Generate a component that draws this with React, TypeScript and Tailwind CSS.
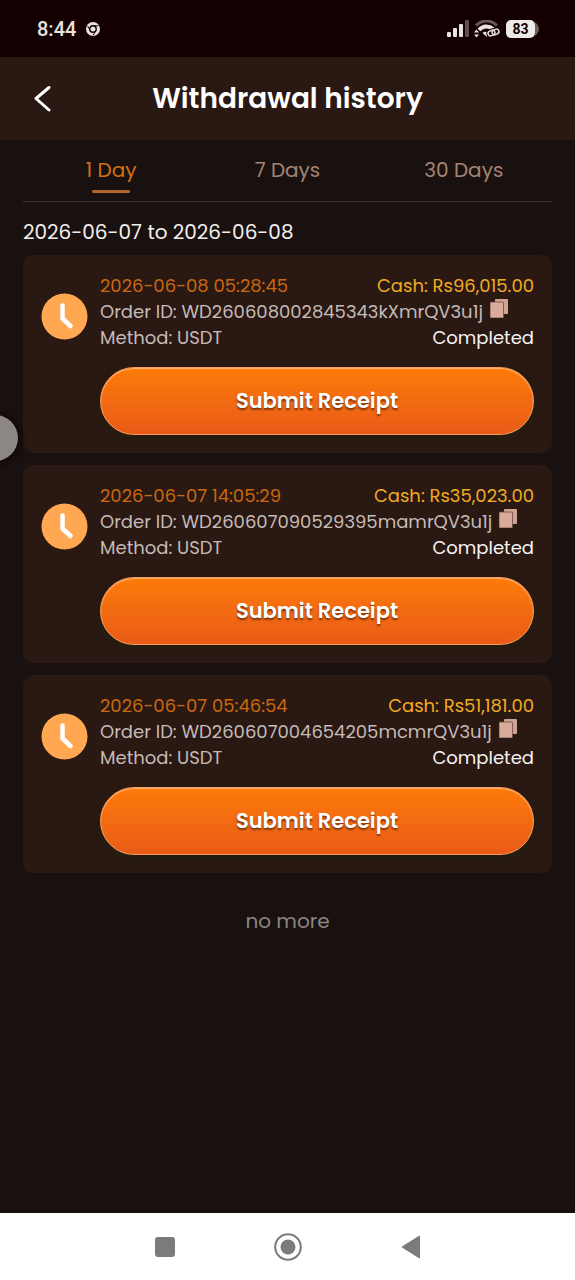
import React from "react";

interface Withdrawal {
  date: string;
  cash: string;
  orderId: string;
  method: string;
  status: string;
}

const withdrawals: Withdrawal[] = [
  {
    date: "2026-06-08 05:28:45",
    cash: "Rs96,015.00",
    orderId: "WD260608002845343kXmrQV3u1j",
    method: "USDT",
    status: "Completed",
  },
  {
    date: "2026-06-07 14:05:29",
    cash: "Rs35,023.00",
    orderId: "WD260607090529395mamrQV3u1j",
    method: "USDT",
    status: "Completed",
  },
  {
    date: "2026-06-07 05:46:54",
    cash: "Rs51,181.00",
    orderId: "WD260607004654205mcmrQV3u1j",
    method: "USDT",
    status: "Completed",
  },
];

const tabs = ["1 Day", "7 Days", "30 Days"];

const StatusBar: React.FC = () => {
  return (
    <div className="flex h-[57px] items-center justify-between bg-[#140000] pl-[37px] pr-[36px] text-[#e8e2e1]">
      <div className="flex items-center gap-[10px]">
        <span className="font-['Roboto',sans-serif] text-[20px] font-medium leading-6">8:44</span>
        <svg className="h-[14px] w-[14px]" viewBox="0 0 14 14" fill="none" aria-hidden="true">
          <circle cx="7" cy="7" r="7" fill="currentColor" />
          <circle cx="7" cy="7" r="3.2" stroke="#140000" strokeWidth="1.4" />
          <path d="M7 3.800h5.500M4.200 8.600 1.700 4.200M9.800 8.600 7 13.400" stroke="#140000" strokeWidth="1" />
        </svg>
      </div>
      <div className="flex items-center gap-[5px]">
        <svg className="h-[17px] w-[22px]" viewBox="0 0 22 17" aria-hidden="true">
          <g fill="currentColor">
            <rect x="0" y="12" width="4" height="5" rx="1" />
            <rect x="6" y="8" width="4" height="9" rx="1" />
            <rect x="12" y="4" width="4" height="13" rx="1" />
            <rect x="18" y="0" width="4" height="17" rx="1" opacity="0.35" />
          </g>
        </svg>
        <svg className="h-[18px] w-[27px]" viewBox="0 0 27 18" fill="none" aria-hidden="true">
          <path d="M2 5.500C8-.5 17-.5 23 5.500" stroke="currentColor" strokeWidth="3" opacity="0.4" />
          <path d="M5 10c4-4.500 10-4.500 14-1" stroke="currentColor" strokeWidth="4" />
          <path d="M8.500 13c1.500-1.500 3.500-1.500 4.500-.5V17z" fill="currentColor" />
          <path d="m0 12.500 2.500-3 2.500 3zM0 14.500l2.500 3 2.500-3z" fill="currentColor" />
          <g stroke="#140000" strokeWidth="3.500">
            <rect x="14" y="10.500" width="7" height="5" rx="2.500" transform="rotate(-25 17.500 13)" />
            <rect x="18" y="9.500" width="7" height="5" rx="2.500" transform="rotate(-25 21.500 12)" />
          </g>
          <g stroke="currentColor" strokeWidth="1.500">
            <rect x="14" y="10.500" width="7" height="5" rx="2.500" transform="rotate(-25 17.500 13)" />
            <rect x="18" y="9.500" width="7" height="5" rx="2.500" transform="rotate(-25 21.500 12)" />
          </g>
        </svg>
        <div className="flex items-center">
          <span className="flex h-[18px] w-[29px] items-center justify-center rounded-[5px] bg-[#eeeae9] font-['Roboto',sans-serif] text-[14px] font-bold leading-4 text-[#140000]">
            83
          </span>
          <svg className="h-[14px] w-1" viewBox="0 0 4 14" aria-hidden="true">
            <path d="M0 0c2 2 4 4 4 7s-2 5-4 7z" fill="#6b5f5e" />
          </svg>
        </div>
      </div>
    </div>
  );
};

const ClockIcon: React.FC = () => {
  return (
    <svg className="mt-5 h-[47px] w-[47px] shrink-0" viewBox="0 0 47 47" fill="none" aria-hidden="true">
      <circle cx="23.500" cy="23.500" r="23" fill="#ffa851" />
      <path
        d="M21.500 12.500v13l8 7.500"
        stroke="#fff"
        strokeWidth="4.500"
        strokeLinecap="round"
        strokeLinejoin="round"
      />
    </svg>
  );
};

const CopyIcon: React.FC = () => {
  return (
    <svg className="h-[19px] w-[18px]" viewBox="0 0 18 19" aria-hidden="true">
      <rect x="5" y="0" width="13" height="15" rx="1" fill="#cfa293" />
      <rect x="0" y="3" width="13.500" height="16" rx="1" fill="#d8ab9b" stroke="#6b4a3e" strokeWidth="0.800" />
    </svg>
  );
};

const WithdrawalCard: React.FC<{ item: Withdrawal }> = ({ item }) => {
  return (
    <li className="flex gap-3 rounded-[10px] bg-[#2a1812] px-[18px] pb-[18px] pt-[18px]">
      <ClockIcon />
      <div className="min-w-0 flex-1">
        <div className="whitespace-nowrap text-[18px] leading-[26px] text-[#c5bbb8]">
          <div className="flex justify-between">
            <span className="text-[#c9680f]">{item.date}</span>
            <span className="text-[#f2ab22]">Cash: {item.cash}</span>
          </div>
          <div className="flex gap-[7px]">
            <span>Order ID: {item.orderId}</span>
            <button type="button" aria-label="Copy order ID" className="flex h-5 items-start">
              <CopyIcon />
            </button>
          </div>
          <div className="flex justify-between">
            <span>Method: {item.method}</span>
            <span className="text-[#f8f4f2]">{item.status}</span>
          </div>
        </div>
        <button
          type="button"
          className="mt-4 h-[68px] w-full rounded-full border border-[#f79a5e] bg-linear-to-b from-[#fd7a08] to-[#e95b17] text-[21px] font-semibold leading-8 text-white shadow-[inset_0_1px_1px_#ffb475,0_3px_8px_#24200f] text-shadow-[0_2px_2px_#7a3208]"
        >
          Submit Receipt
        </button>
      </div>
    </li>
  );
};

const App: React.FC = () => {
  return (
    <div className="relative flex min-h-screen flex-col overflow-hidden bg-[#19110f] font-['Poppins','Inter','Liberation_Sans',sans-serif]">
      <StatusBar />
      <header className="grid h-[83px] grid-cols-[1fr_auto_1fr] items-center bg-[#2a1813] px-[33px] text-white">
        <button type="button" aria-label="Back" className="w-[19px]">
          <svg className="h-[27px] w-[19px]" viewBox="0 0 19 27" fill="none" aria-hidden="true">
            <path d="M16 2.500 3 13.500l13 11.500" stroke="#fff" strokeWidth="3" strokeLinecap="round" strokeLinejoin="round" />
          </svg>
        </button>
        <h1 className="text-[28px] font-semibold leading-9">Withdrawal history</h1>
      </header>

      <main className="flex-1 px-[23px]">
        <nav className="grid h-[62px] grid-cols-3 border-b border-[#3a302d]">
          {tabs.map((tab, index) => (
            <button
              key={tab}
              type="button"
              className={`flex flex-col items-center pt-4 text-[20px] leading-7 ${
                index === 0 ? "text-[#d0700f]" : "text-[#a58475]"
              }`}
            >
              {tab}
              {index === 0 && <span className="mt-[6px] h-[3px] w-[38px] rounded-full bg-[#b0682d]" />}
            </button>
          ))}
        </nav>

        <p className="pb-[9px] pt-4 text-[20px] leading-7 text-[#f3efed]">2026-06-07 to 2026-06-08</p>

        <ul className="flex flex-col gap-3">
          {withdrawals.map((item) => (
            <WithdrawalCard key={item.orderId} item={item} />
          ))}
        </ul>

        <p className="py-[34px] text-center text-[20px] leading-7 text-[#8b8685]">no more</p>
      </main>

      <button
        type="button"
        aria-label="Open side panel"
        className="absolute -left-7 top-[415px] h-[46px] w-[46px] rounded-full bg-[#8c8785] shadow-[0_0_5px_4px_#120b0a]"
      />

      <footer className="grid h-[67px] grid-cols-[1fr_123px_123px_123px_1fr] items-center bg-white text-[#7b7b7b]">
        <button type="button" aria-label="Recent apps" className="col-start-2 flex justify-center">
          <span className="h-5 w-5 rounded-[3px] bg-current" />
        </button>
        <button type="button" aria-label="Home" className="flex justify-center">
          <svg className="h-7 w-7" viewBox="0 0 28 28" fill="none" aria-hidden="true">
            <circle cx="14" cy="14" r="12.800" stroke="currentColor" strokeWidth="2" />
            <circle cx="14" cy="14" r="7.500" fill="currentColor" />
          </svg>
        </button>
        <button type="button" aria-label="Back to previous app" className="flex justify-center">
          <svg className="h-6 w-5" viewBox="0 0 20 24" aria-hidden="true">
            <path d="M1 12 18.500 1v22z" fill="currentColor" stroke="currentColor" strokeLinejoin="round" />
          </svg>
        </button>
      </footer>
    </div>
  );
};

export default App;
